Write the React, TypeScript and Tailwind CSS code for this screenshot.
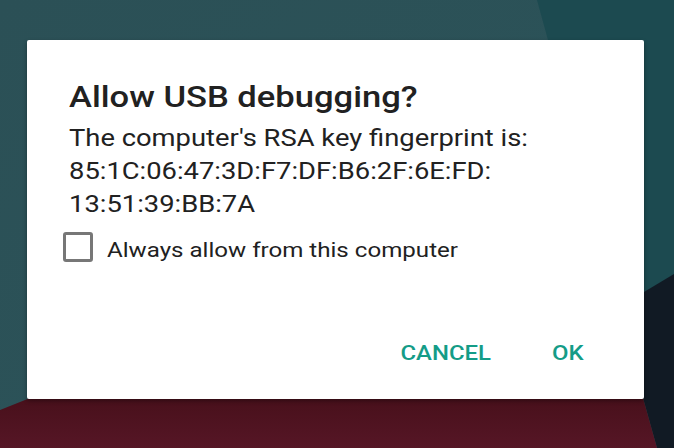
import React from "react";

export default function App() {
  return (
    <div
      className="relative w-[674px] h-[448px] overflow-hidden bg-[#2b5056]"
      style={{ fontFamily: "Roboto, 'Liberation Sans', sans-serif" }}
    >
      <svg
        className="absolute inset-0"
        width="674"
        height="448"
        viewBox="0 0 674 448"
      >
        <defs>
          <linearGradient id="mar" x1="0" y1="0" x2="0" y2="1">
            <stop offset="0" stopColor="#48101b" />
            <stop offset="1" stopColor="#561626" />
          </linearGradient>
          <linearGradient id="tl" x1="0" y1="0" x2="1" y2="1">
            <stop offset="0" stopColor="#2b5056" />
            <stop offset="1" stopColor="#2c545a" />
          </linearGradient>
        </defs>
        <rect x="0" y="0" width="674" height="448" fill="url(#tl)" />
        <polygon points="537,0 674,0 674,448 560,448 548,40" fill="#1c4a50" />
        <polygon points="644,292 674,274 674,448 657,448 643,398" fill="#111a24" />
        <polygon points="0,410 30,398 643,398 657,448 0,448" fill="url(#mar)" />
      </svg>

      <div className="relative ml-[27px] mt-[40px] w-[617px] h-[359px] bg-white rounded-[2px] shadow-[0_2px_4px_rgba(0,0,0,0.35)] flex flex-col">
        <div className="ml-[42px] pt-[39px] text-[30px] leading-[36px] font-medium text-[#212121] origin-left scale-x-[1.152]">
          Allow USB debugging?
        </div>
        <div className="ml-[42px] mt-[7px] text-[24px] leading-[33px] text-[#212121] origin-left scale-x-[1.14]">
          <div>The computer's RSA key fingerprint is:</div>
          <div>85:1C:06:47:3D:F7:DF:B6:2F:6E:FD:</div>
          <div>13:51:39:BB:7A</div>
        </div>
        <div className="flex items-start pl-[36px] mt-[11px]">
          <div className="w-[30px] h-[30px] border-[3px] border-[#777777] rounded-[3px] shrink-0" />
          <div className="ml-[14px] pt-[3px] text-[21px] leading-[30px] text-[#212121] origin-left scale-x-[1.148]">
            Always allow from this computer
          </div>
        </div>
        <div className="mt-auto flex justify-end items-center pr-[62px] pb-[34px] gap-[69px] text-[21px] leading-[24px] font-medium text-[#149c87]">
          <span className="inline-block scale-x-[1.14]">CANCEL</span>
          <span className="inline-block scale-x-[1.14]">OK</span>
        </div>
      </div>
    </div>
  );
}
